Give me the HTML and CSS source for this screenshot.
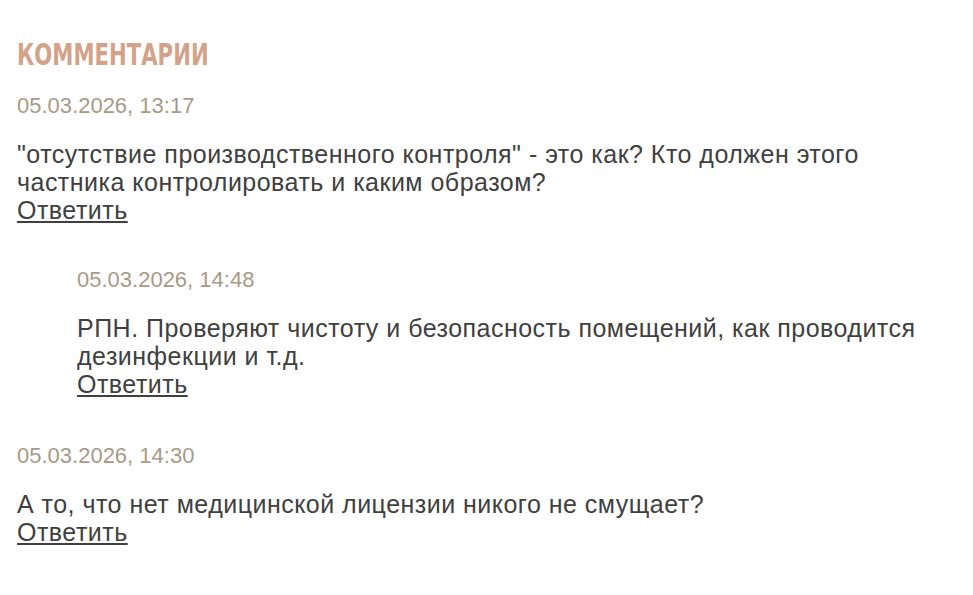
FILE: index.html
```html
<!DOCTYPE html>
<html lang="ru">
<head>
<meta charset="utf-8">
<link rel="stylesheet" href="styles.css">
</head>
<body>
<section class="comments">
  <h2 class="comments-title"><span class="comments-title-text">Комментарии</span></h2>
  <div class="comment">
    <div class="comment-date">05.03.2026, 13:17</div>
    <div class="comment-text">"отсутствие производственного контроля" - это как? Кто должен этого частника контролировать и каким образом?</div>
    <a class="comment-reply" href="#">Ответить</a>
    <div class="comment reply">
      <div class="comment-date">05.03.2026, 14:48</div>
      <div class="comment-text">РПН. Проверяют чистоту и безопасность помещений, как проводится дезинфекции и т.д.</div>
      <a class="comment-reply" href="#">Ответить</a>
    </div>
  </div>
  <div class="comment">
    <div class="comment-date">05.03.2026, 14:30</div>
    <div class="comment-text">А то, что нет медицинской лицензии никого не смущает?</div>
    <a class="comment-reply" href="#">Ответить</a>
  </div>
</section>
</body>
</html>
```
FILE: styles.css
```css
html, body {
  margin: 0;
  padding: 0;
  background: #ffffff;
}
body {
  font-family: "Liberation Sans", Arial, sans-serif;
  color: #404040;
}
.comments {
  padding: 36px 17px 0 17px;
  width: 910px;
}
.comments-title {
  margin: 0 0 20px 0;
  font-family: "DejaVu Sans Condensed", "DejaVu Sans", sans-serif;
  font-weight: bold;
  font-size: 31px;
  line-height: 36px;
  text-transform: uppercase;
  color: #d2a389;
}
.comments-title-text {
  display: inline-block;
  transform: scaleX(0.76);
  transform-origin: left center;
}
.comment {
  display: flex;
  flex-direction: column;
  align-items: flex-start;
}
.comment + .comment {
  margin-top: 44px;
}
.comment-date {
  font-size: 22px;
  line-height: 28px;
  color: #a89a88;
  margin-bottom: 20px;
}
.comment-text {
  font-size: 25px;
  line-height: 28px;
  letter-spacing: 0.48px;
}
.comment-reply {
  font-size: 25px;
  line-height: 28px;
  letter-spacing: 0.48px;
  color: #404040;
  text-decoration: underline;
}
.reply {
  margin-top: 42px;
  margin-left: 60px;
}
```
